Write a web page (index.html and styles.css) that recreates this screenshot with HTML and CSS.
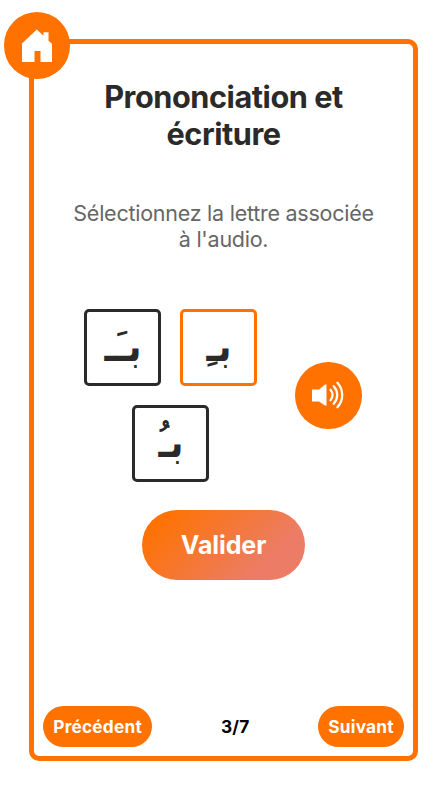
FILE: index.html
```html
<!DOCTYPE html>
<html lang="fr">
<head>
<meta charset="utf-8">
<title>Prononciation et écriture</title>
<link rel="stylesheet" href="styles.css">
</head>
<body>
<main class="card">
  <a class="round home" href="#" aria-label="Accueil">
    <svg width="32" height="35" viewBox="0 0 32 35"><path d="M1 34V15.500L15.800 1.500l6.700 6.200V4.200h5v8.500L31 15.800V34H19.500V23h-6v11Z" fill="#fff"/></svg>
  </a>
  <h1 class="title">Prononciation et écriture</h1>
  <p class="hint">Sélectionnez la lettre associée à l'audio.</p>
  <section class="exercise">
    <div class="choices" lang="ar">
      <button class="choice"><span>بـَـ</span></button>
      <button class="choice selected"><span>بـِ</span></button>
      <button class="choice"><span>بـُ</span></button>
    </div>
    <button class="round audio" aria-label="Écouter">
      <svg width="32" height="28" viewBox="0 0 32 28"><path d="M0 8.500h7L13 3.500h1.500v21H13L7 20.500H0Z" fill="#fff"/><g fill="none" stroke="#fff" stroke-width="2.300" stroke-linecap="round"><path d="M18.500 8.800c2.700 3 2.700 7.400 0 10.400M21.700 5.200c4.700 5.200 4.700 12.400 0 17.600M25.400 1.800c6.400 7 6.400 17.400 0 24.400"/></g></svg>
    </button>
  </section>
  <button class="submit">Valider</button>
  <nav class="pager">
    <button class="step">Précédent</button>
    <span class="count">3/7</span>
    <button class="step">Suivant</button>
  </nav>
</main>
</body>
</html>
```
FILE: styles.css
```css
* { box-sizing: border-box; }
body {
  margin: 0;
  background: #fff;
  font-family: Inter, "Liberation Sans", sans-serif;
  color: #2b2a29;
}
button { font-family: inherit; border: 0; padding: 0; }
.card {
  position: relative;
  display: flex;
  flex-direction: column;
  align-items: center;
  width: 388.500px;
  height: 722px;
  margin: 39px 0 0 29.300px;
  padding: 34px 9px 9px;
  border: 5px solid #ff7200;
  border-radius: 10px;
}
.round {
  display: flex;
  align-items: center;
  justify-content: center;
  width: 66.500px;
  height: 66.500px;
  border-radius: 50%;
  background: #ff7200;
}
.home { position: absolute; left: -30.500px; top: -32px; }
.audio svg { position: relative; left: -.5px; top: -1px; }
.title {
  width: 300px;
  margin: 0;
  font-size: 30.700px;
  font-weight: 700;
  line-height: 37px;
  letter-spacing: -.45px;
  text-align: center;
}
.hint {
  width: 310px;
  margin: 48px 0 0;
  font-size: 21.500px;
  font-weight: 400;
  line-height: 26px;
  letter-spacing: -.25px;
  text-align: center;
  color: #666;
}
.exercise {
  display: flex;
  align-items: center;
  align-self: stretch;
  gap: 29px;
  margin-top: 57px;
  padding-left: 31px;
}
.choices {
  display: flex;
  flex-wrap: wrap;
  justify-content: center;
  gap: 19px;
  width: 193.300px;
  padding: 0 9px;
  margin-right: -1.300px;
}
.choice {
  width: 77px;
  height: 77px;
  border: 3px solid #2b2a29;
  border-radius: 5px;
  background: #fff;
  color: #2b2a29;
  font-family: "DejaVu Sans", sans-serif;
  font-size: 35px;
  font-weight: 700;
}
.choice span {
  display: inline-block;
  transform: translateY(-1px) scaleY(1.2);
}
.choice.selected { border-color: #ff7200; }
.submit {
  flex: none;
  width: 163px;
  height: 70px;
  margin-top: 28px;
  border-radius: 35px;
  background: linear-gradient(135deg, #ff7200 10%, #ec7c65 75%);
  color: #fff;
  font-size: 25px;
  font-weight: 700;
  letter-spacing: -.1px;
}
.pager {
  display: flex;
  align-items: center;
  justify-content: space-between;
  align-self: stretch;
  margin-top: auto;
}
.step {
  height: 41px;
  padding: 0 10px;
  border-radius: 21px;
  background: #ff7200;
  color: #fff;
  font-size: 17.300px;
  font-weight: 700;
  letter-spacing: .2px;
}
.count { color: #000; font-size: 17.300px; font-weight: 700; letter-spacing: .2px; }
```
